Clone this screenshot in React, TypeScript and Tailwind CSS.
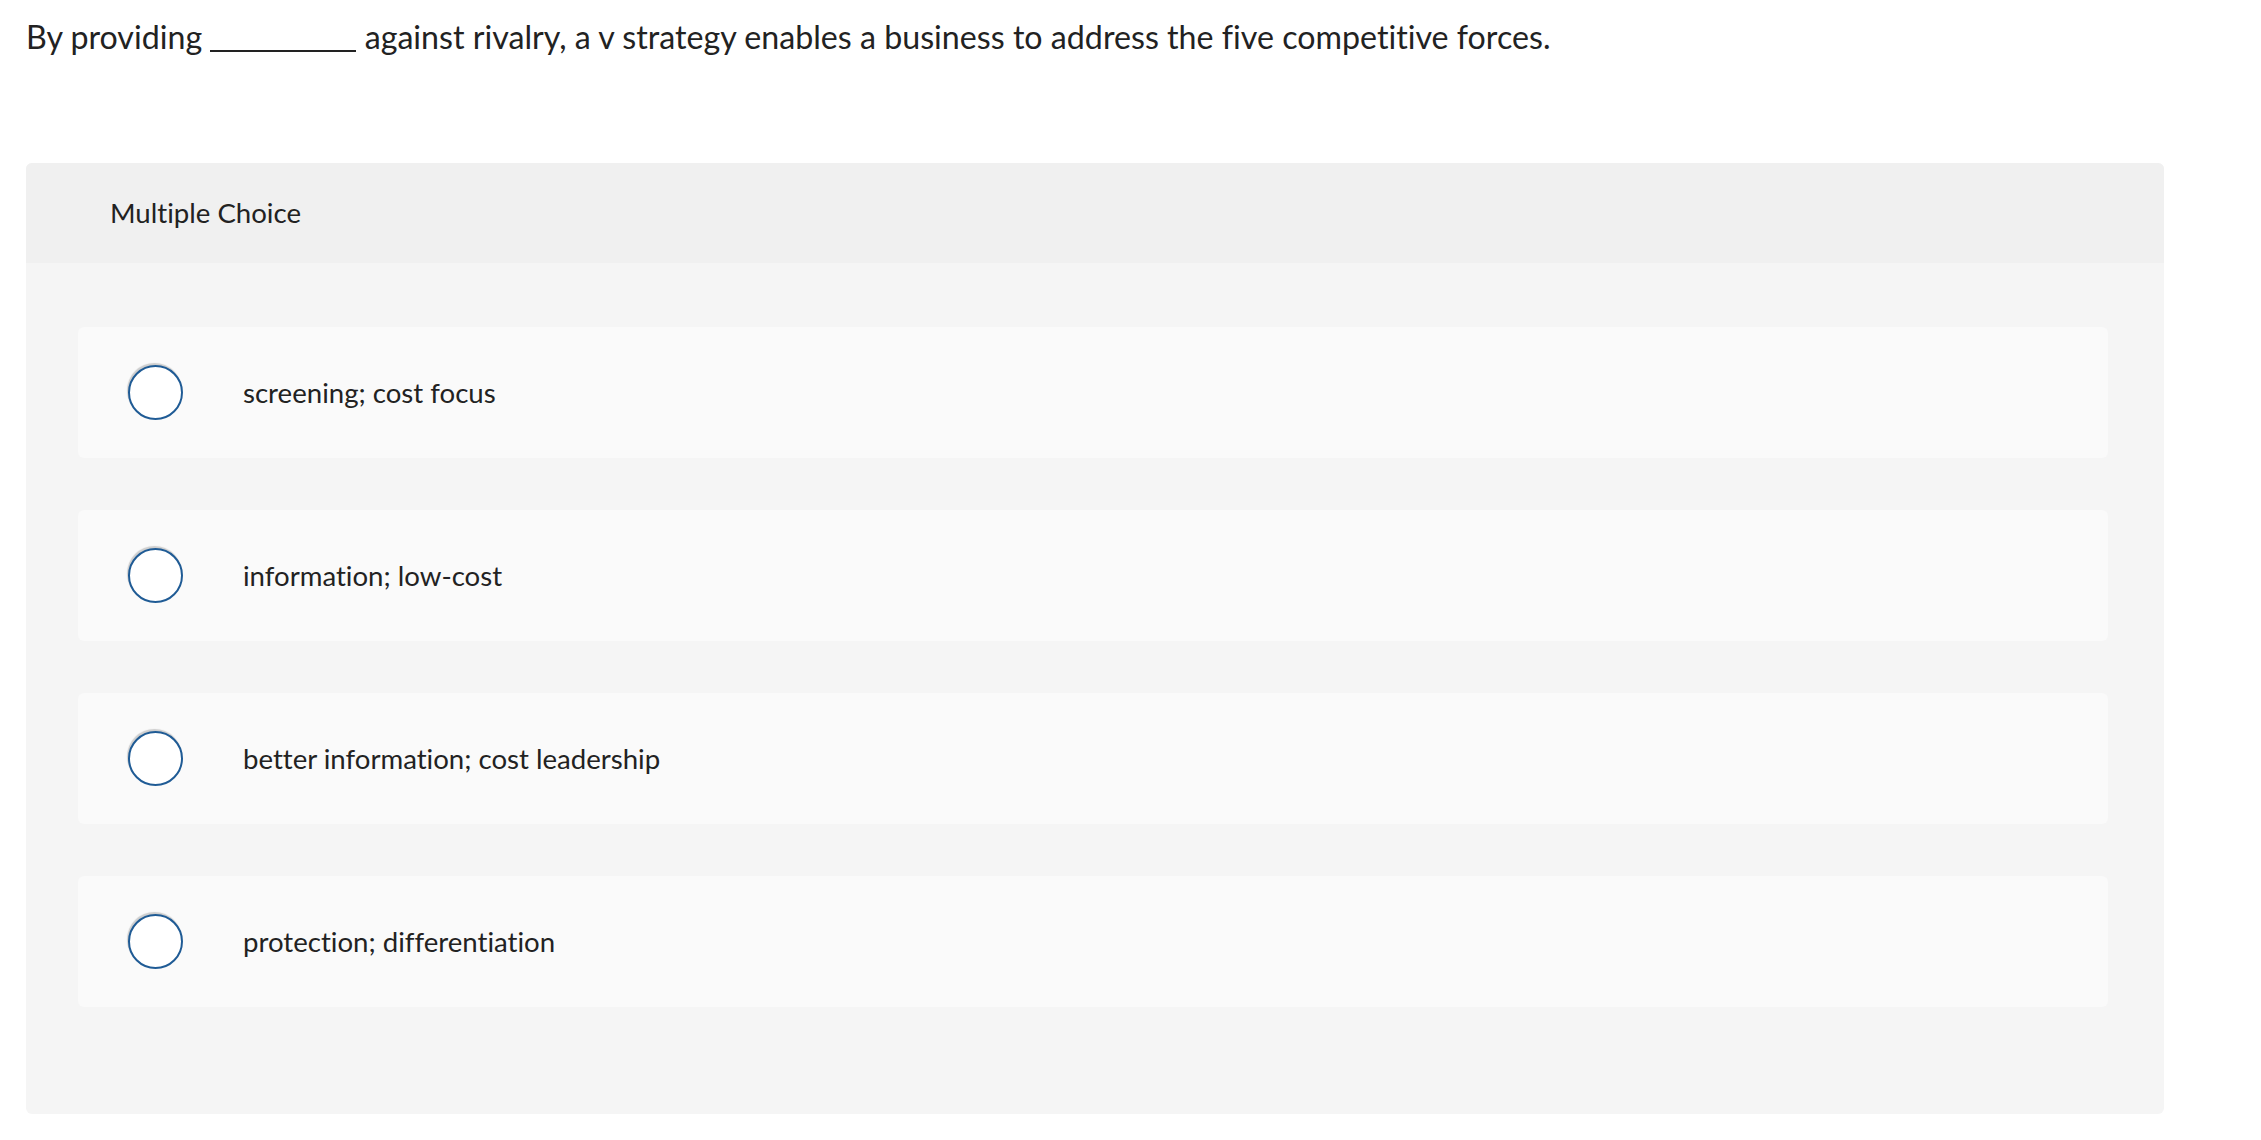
import React from "react";

const options = [
  "screening; cost focus",
  "information; low-cost",
  "better information; cost leadership",
  "protection; differentiation",
];

export default function App() {
  return (
    <div
      className="min-h-screen bg-white px-[26px] pt-[16px] text-[#222222] [font-variant-ligatures:none]"
      style={{ fontFamily: 'Lato, "Open Sans", sans-serif' }}
    >
      <p className="text-[32.2px] leading-[42px]">
        By providing{" "}
        <span className="inline-block w-[146px] translate-y-[3px] border-b-[2px] border-[#222222] align-baseline"></span>{" "}
        against rivalry, a v strategy enables a business to address the five competitive forces.
      </p>

      <div className="mt-[105px] w-[2138px] overflow-hidden rounded-[6px] bg-[#f5f5f5]">
        <div className="flex h-[100px] items-center bg-[#f0f0f0] pl-[84px] text-[27.6px]">
          Multiple Choice
        </div>
        <div className="flex flex-col gap-[52px] pb-[107px] pl-[52px] pr-[56px] pt-[64px]">
          {options.map((o) => (
            <label key={o} className="flex h-[131px] items-center rounded-[6px] bg-[#fafafa] pl-[50px]">
              <span className="h-[55px] w-[55px] shrink-0 rounded-full border-[2px] border-[#1f5b95] bg-white shadow-[-1px_-2px_1px_rgba(0,0,0,0.18)]"></span>
              <span className="ml-[60px] text-[27.6px]">{o}</span>
            </label>
          ))}
        </div>
      </div>
    </div>
  );
}
